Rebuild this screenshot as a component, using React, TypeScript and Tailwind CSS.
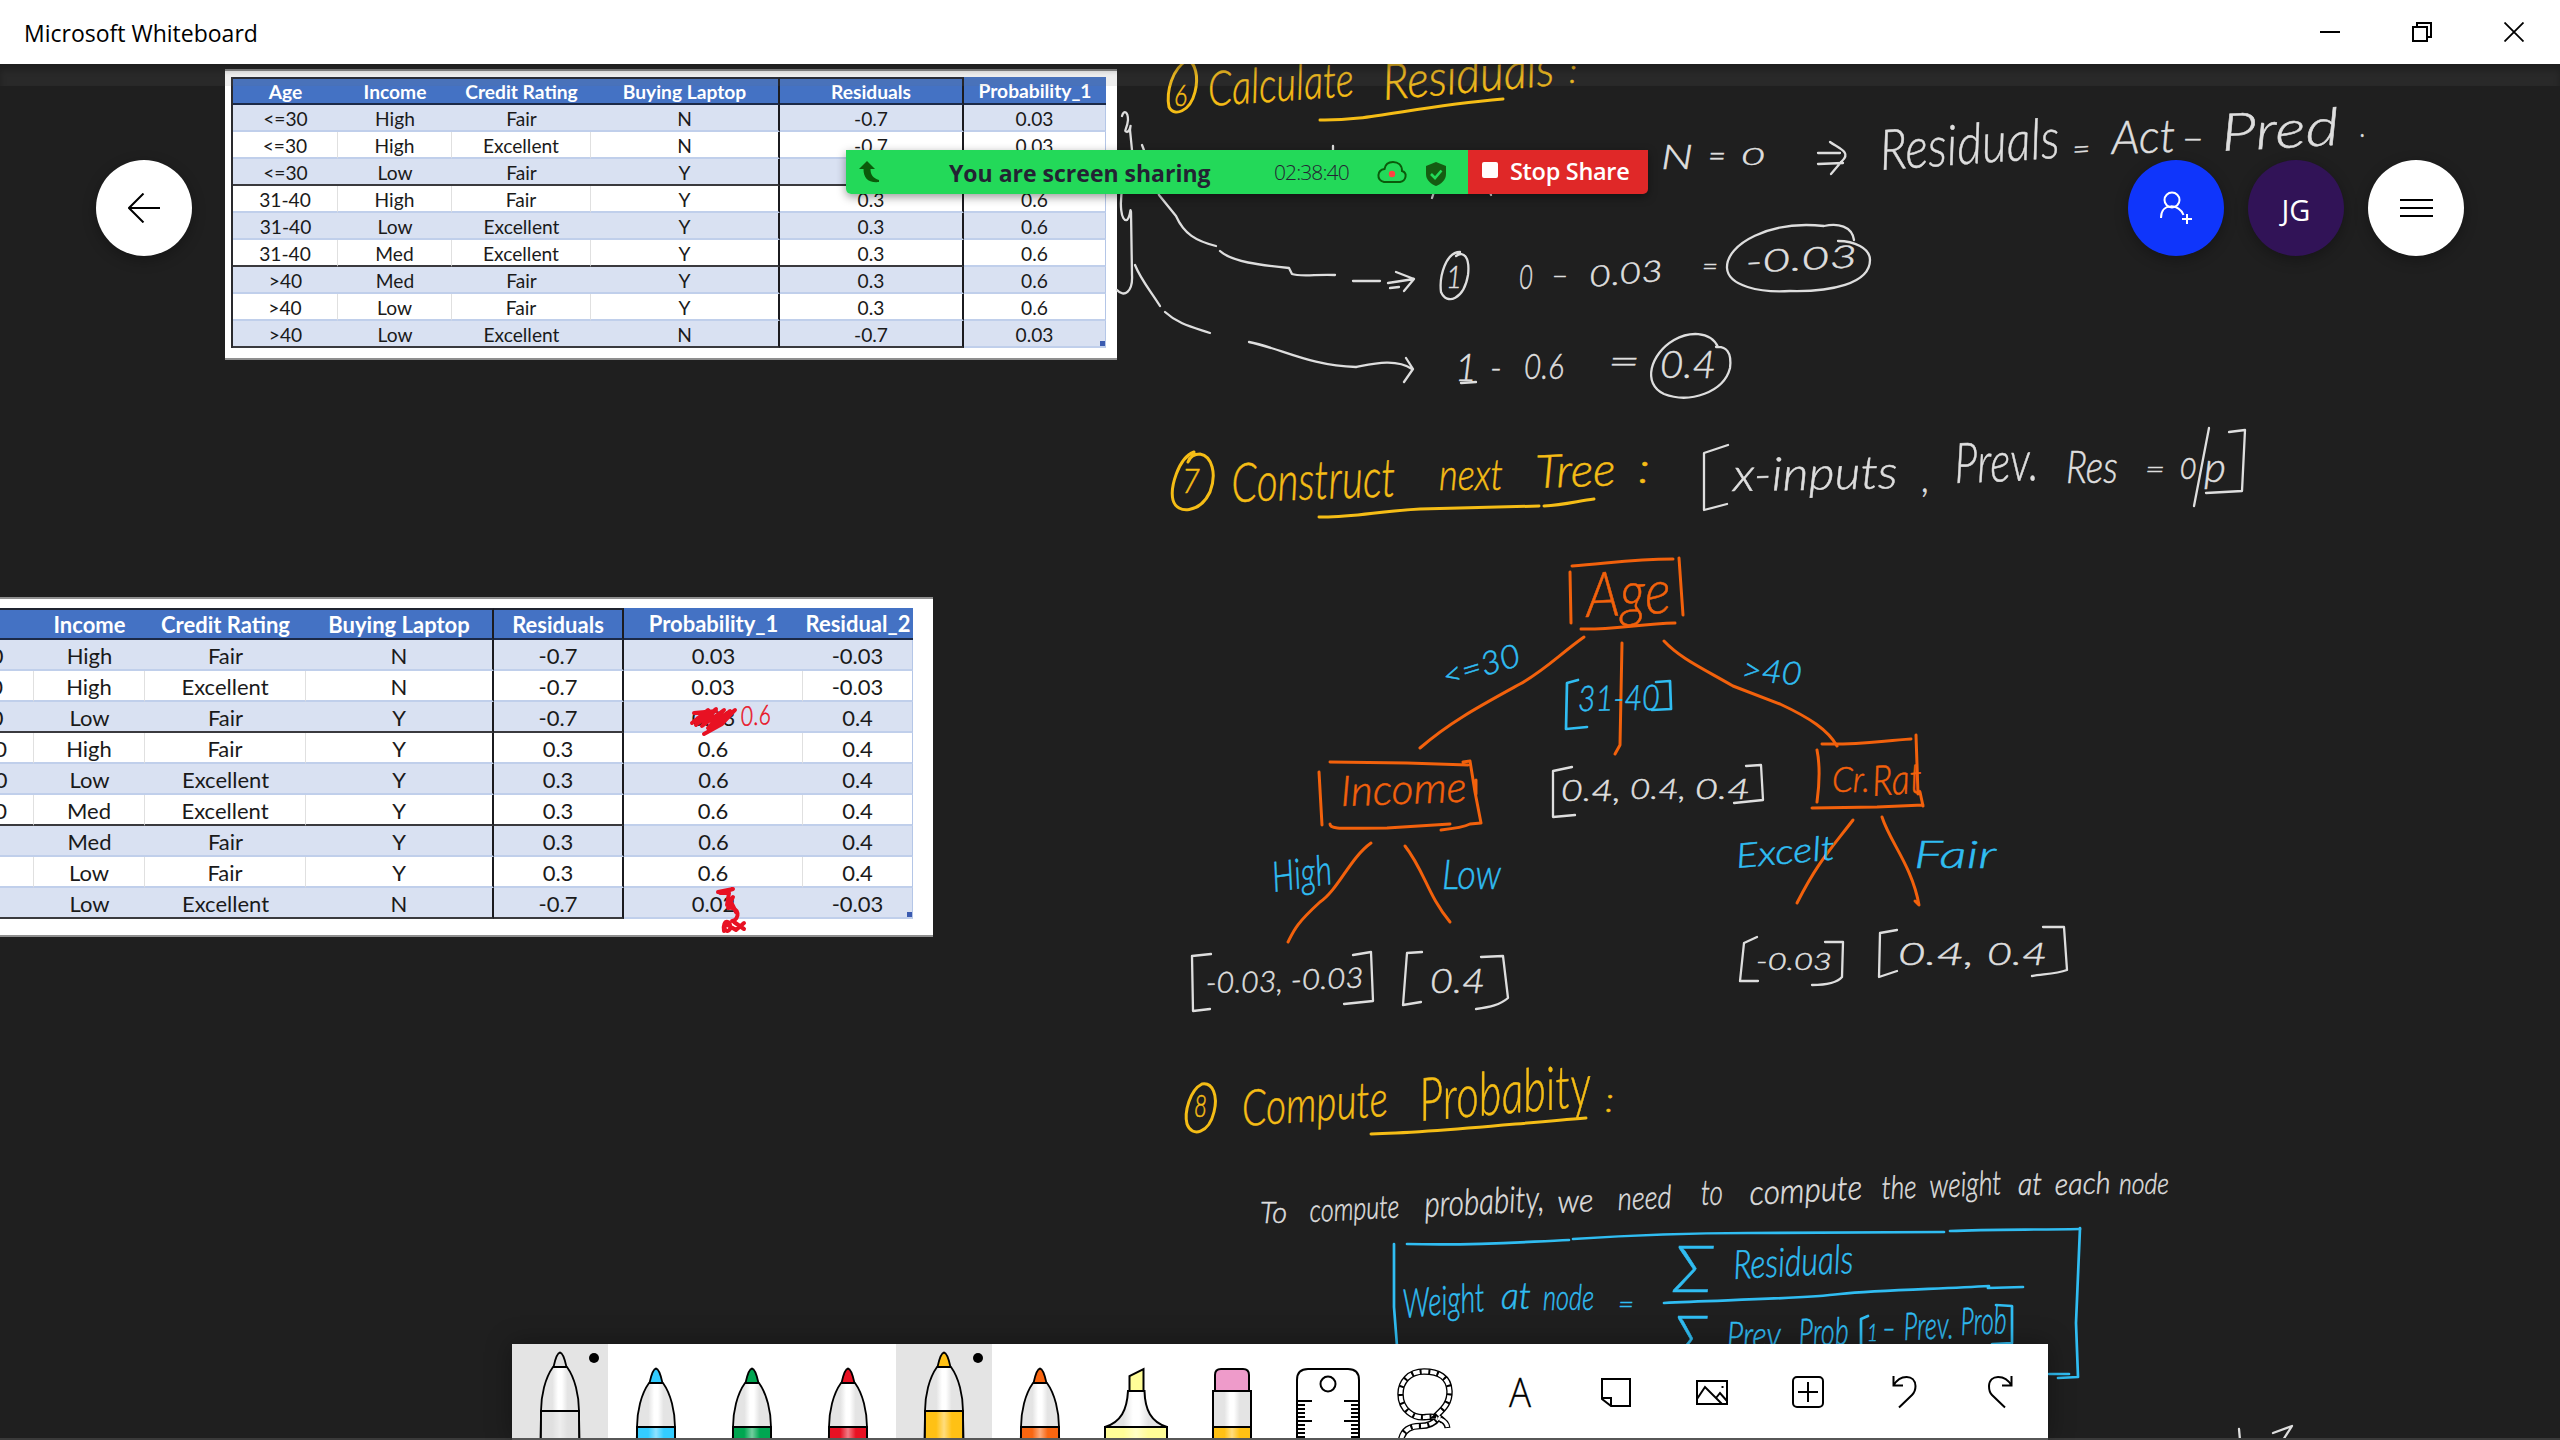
import React from "react";

const UI = "font-['Open_Sans','Noto_Sans',sans-serif]";

/* ---------- spreadsheets pasted on the board ---------- */

type SheetProps = {
  header: string[];
  rows: string[][];
  columns: string;
  rowTemplate: string;
  boxedColumns: number;
  textSize: string;
};

function Sheet({ header, rows, columns, rowTemplate, boxedColumns, textSize }: SheetProps) {
  const lastRow = rows.length - 1;
  const last = header.length - 1;
  return (
    <div className={`relative grid ${columns} ${rowTemplate} ${textSize} font-['Lato','Open_Sans',sans-serif] text-center text-[#1a1a1a]`}>
      {header.map((h, i) => (
        <div
          key={h}
          className={`flex items-center justify-center whitespace-nowrap border-b-2 border-b-[#1c2a48] bg-[#4472c4] pt-[2px] font-bold text-white ${
            i <= boxedColumns ? "border-t-2 border-t-[#1f2430]" : ""
          } ${i === boxedColumns || i === boxedColumns - 1 ? "border-r-2 border-r-[#1b1b1f]" : ""}`}
        >
          {h}
        </div>
      ))}
      {rows.map((r, ri) =>
        r.map((c, ci) => {
          const banded = ri % 2 === 0;
          const boxed = ci <= boxedColumns;
          const heavy = boxed && (ri === 2 || ri === 5 || ri === lastRow);
          const edge = ci === boxedColumns || ci === boxedColumns - 1;
          return (
            <div
              key={`${ri}-${ci}`}
              className={`flex items-center justify-center whitespace-nowrap pt-[3px] ${banded ? "bg-[#d9e1f2]" : "bg-white"} ${
                heavy ? "border-b-2 border-b-[#3a3a3e]" : "border-b-2 border-b-[#c0cfeb]"
              } ${
                edge
                  ? "border-r-2 border-r-[#1b1b1f]"
                  : ci === last
                    ? "border-r border-r-[#b4c6e7]"
                    : banded
                      ? ""
                      : "border-r border-r-[#e0e0e0]"
              }`}
            >
              {c}
            </div>
          );
        }),
      )}
      <span className="absolute bottom-[2px] right-[1px] size-[5px] bg-[#3b5bb0]" />
    </div>
  );
}

const sheetA = [
  ["<=30", "High", "Fair", "N", "-0.7", "0.03"],
  ["<=30", "High", "Excellent", "N", "-0.7", "0.03"],
  ["<=30", "Low", "Fair", "Y", "-0.7", "0.6"],
  ["31-40", "High", "Fair", "Y", "0.3", "0.6"],
  ["31-40", "Low", "Excellent", "Y", "0.3", "0.6"],
  ["31-40", "Med", "Excellent", "Y", "0.3", "0.6"],
  [">40", "Med", "Fair", "Y", "0.3", "0.6"],
  [">40", "Low", "Fair", "Y", "0.3", "0.6"],
  [">40", "Low", "Excellent", "N", "-0.7", "0.03"],
];

const sheetB = [
  ["<=30", "High", "Fair", "N", "-0.7", "0.03", "-0.03"],
  ["<=30", "High", "Excellent", "N", "-0.7", "0.03", "-0.03"],
  ["<=30", "Low", "Fair", "Y", "-0.7", "0.03", "0.4"],
  ["31-40", "High", "Fair", "Y", "0.3", "0.6", "0.4"],
  ["31-40", "Low", "Excellent", "Y", "0.3", "0.6", "0.4"],
  ["31-40", "Med", "Excellent", "Y", "0.3", "0.6", "0.4"],
  [">40", "Med", "Fair", "Y", "0.3", "0.6", "0.4"],
  [">40", "Low", "Fair", "Y", "0.3", "0.6", "0.4"],
  [">40", "Low", "Excellent", "N", "-0.7", "0.02", "-0.03"],
];

/* ---------- ink ---------- */

const YELLOW = "#f5bd16";
const WHITE = "#dedede";
const ORANGE = "#f2610c";
const BLUE = "#30bdf2";
const RED = "#e81123";

// text, x, baseline, width, font size, rotation
type Note = [string, number, number, number, number, number?];

const notes: { color: string; items: Note[] }[] = [
  {
    color: YELLOW,
    items: [
      ["6", 1174, 106, 13, 29],
      ["Calculate", 1209, 106, 146, 48, -4],
      ["Residuals", 1384, 100, 172, 50, -5],
      [":", 1569, 83, 8, 34],
      ["7", 1182, 493, 18, 34],
      ["Construct", 1232, 502, 164, 54, -2],
      ["next", 1439, 490, 64, 44],
      ["Tree", 1536, 488, 80, 46, -2],
      [":", 1638, 483, 12, 44],
      ["8", 1194, 1117, 13, 32],
      ["Compute", 1243, 1126, 146, 50, -4],
      ["Probabity", 1421, 1121, 172, 60, -5],
      [":", 1605, 1112, 9, 34],
    ],
  },
  {
    color: WHITE,
    items: [
      ["N", 1661, 169, 32, 33],
      ["=", 1708, 167, 18, 34],
      ["0", 1741, 165, 24, 24],
      ["Residuals", 1881, 170, 180, 56, -4],
      ["=", 2073, 160, 18, 30, -4],
      ["Act", 2112, 154, 64, 46, -2],
      ["–", 2181, 149, 24, 34],
      ["Pred", 2222, 151, 118, 52, -3],
      [".", 2360, 137, 6, 32],
      ["1", 1446, 288, 16, 32],
      ["0", 1519, 289, 14, 34],
      ["–", 1551, 285, 18, 30],
      ["0.03", 1590, 287, 74, 29, -5],
      ["=", 1702, 275, 16, 24],
      ["-0.03", 1746, 273, 112, 31, -3],
      ["1", 1455, 381, 22, 38],
      ["-", 1490, 380, 12, 34],
      ["0.6", 1524, 379, 40, 35],
      ["=", 1608, 374, 32, 36],
      ["0.4", 1660, 378, 56, 37],
      ["x-inputs", 1733, 491, 165, 46, -1],
      [",", 1922, 492, 8, 40],
      ["Prev.", 1955, 483, 84, 56, -2],
      ["Res", 2066, 483, 52, 46],
      ["=", 2145, 479, 20, 28],
      ["o", 2180, 479, 17, 42],
      ["p", 2204, 482, 22, 42],
      ["0.4,", 1561, 801, 60, 29],
      ["0.4,", 1630, 799, 56, 28],
      ["0.4", 1695, 799, 55, 28],
      ["-0.03,", 1206, 993, 77, 29, -1],
      ["-0.03", 1291, 990, 73, 28, -2],
      ["0.4", 1430, 993, 55, 34],
      ["-0.03", 1756, 970, 76, 23],
      ["0.4,", 1898, 965, 76, 31],
      ["0.4", 1987, 965, 60, 31],
      ["To", 1260, 1223, 27, 30],
      ["compute", 1310, 1222, 90, 32, -3],
      ["probabity,", 1425, 1217, 120, 36, -3],
      ["we", 1558, 1213, 36, 32, -3],
      ["need", 1618, 1210, 54, 32, -2],
      ["to", 1701, 1205, 22, 36],
      ["compute", 1750, 1205, 113, 34, -3],
      ["the", 1882, 1199, 35, 32, -2],
      ["weight", 1930, 1198, 72, 34, -3],
      ["at", 2018, 1195, 24, 32],
      ["each", 2055, 1195, 56, 30, -2],
      ["node", 2119, 1194, 50, 30],
    ],
  },
  {
    color: ORANGE,
    items: [
      ["Age", 1587, 617, 85, 62, -3],
      ["Income", 1341, 806, 126, 42, -2],
      ["Cr.", 1832, 792, 38, 36],
      ["Rat", 1873, 796, 50, 42, -4],
    ],
  },
  {
    color: BLUE,
    items: [
      ["<=30", 1446, 688, 80, 32, -17],
      ["31-40", 1578, 711, 82, 35, -1],
      [">40", 1741, 680, 60, 32, 5],
      ["High", 1274, 892, 60, 42, -8],
      ["Low", 1442, 889, 59, 42],
      ["Excelt", 1737, 868, 99, 34, -5],
      ["Fair", 1914, 868, 82, 38],
      ["Σ", 1673, 1292, 40, 66],
      ["Residuals", 1734, 1279, 120, 40, -3],
      ["Weight", 1404, 1318, 82, 40, -5],
      ["at", 1501, 1309, 30, 38],
      ["node", 1543, 1310, 51, 36],
      ["=", 1618, 1313, 16, 26],
      ["Σ", 1673, 1362, 34, 66],
      ["Prev.", 1727, 1349, 60, 38, -1],
      ["Prob", 1799, 1346, 50, 38, -2],
      ["1", 1867, 1341, 11, 24],
      ["-", 1882, 1340, 14, 34],
      ["Prev.", 1904, 1340, 50, 38, -2],
      ["Prob", 1961, 1335, 46, 38, -2],
    ],
  },
  { color: RED, items: [["0.6", 741, 726, 30, 27, -4]] },
];

const strokes: { color: string; width: number; d: string[] }[] = [
  {
    color: YELLOW,
    width: 3,
    d: [
      "M1188 60C1172 68 1166 92 1169 107C1174 117 1190 112 1195 92C1199 76 1195 63 1188 60",
      "M1320 120C1370 121 1410 107 1503 99",
      "M1194 452C1178 458 1170 488 1173 500C1177 515 1200 513 1210 492C1217 474 1212 456 1200 454C1194 454 1190 457 1188 462",
      "M1319 517C1350 518 1380 511 1420 509L1539 506",
      "M1544 506C1564 505 1578 501 1594 499",
      "M1202 1084C1190 1090 1184 1112 1187 1124C1192 1138 1209 1133 1214 1112C1218 1096 1213 1082 1202 1084",
      "M1371 1134C1430 1133 1500 1125 1586 1118",
    ],
  },
  {
    color: WHITE,
    width: 2.3,
    d: [
      "M1122 116C1124 109 1128 112 1128 120C1127 130 1123 131 1127 132C1131 131 1131 120 1130 130L1132 150",
      "M1142 145L1147 158L1159 195L1176 216C1184 234 1196 241 1216 246",
      "M1123 185C1119 204 1121 222 1127 220C1131 216 1130 206 1131 212L1132 275C1133 292 1124 298 1117 290",
      "M1220 251C1232 262 1260 265 1289 268L1292 274C1300 277 1318 274 1335 275",
      "M1353 281L1380 281M1388 283L1414 279M1396 272L1414 279L1404 291M1390 288L1399 287",
      "M1135 265C1141 280 1150 290 1160 306M1165 312C1178 324 1192 327 1210 333",
      "M1249 342C1280 348 1310 366 1356 367C1372 364 1396 358 1412 369M1406 358L1413 369L1404 382",
      "M1460 252C1446 252 1439 276 1441 292C1447 306 1464 299 1468 275C1470 258 1464 250 1456 256",
      "M1818 153L1840 153M1818 164L1843 163M1830 142C1838 148 1852 152 1842 161L1831 174",
      "M1854 240C1852 226 1838 223 1824 226C1770 220 1726 244 1727 268C1728 286 1760 293 1790 291C1830 292 1870 284 1870 260C1870 248 1854 241 1838 241",
      "M1718 347C1710 330 1688 332 1674 340C1650 354 1642 384 1664 394C1690 404 1724 392 1730 368C1732 352 1726 346 1716 347",
      "M1461 383L1476 382",
      "M1728 445L1704 453L1704 510L1727 504",
      "M2209 428L2194 506",
      "M2229 432L2245 430L2242 491L2206 493",
      "M1572 767L1553 771L1553 817L1575 815",
      "M1746 766L1761 765L1763 800L1734 803",
      "M1211 954L1192 956L1193 1011L1210 1009",
      "M1353 955L1371 952L1373 1001L1344 1004",
      "M1422 952L1407 953L1403 1005L1421 1002",
      "M1481 957L1503 956L1508 998C1500 1005 1490 1007 1476 1009",
      "M1757 937L1744 943L1740 981L1758 981",
      "M1825 942L1843 942L1842 977C1836 984 1824 985 1812 985",
      "M1897 930L1880 933L1879 977L1897 971",
      "M2043 927L2064 927L2067 970C2056 974 2044 974 2032 976",
      "M1333 146L1333 152M1434 192L1432 198M1490 192L1491 195",
      "M2239 1429L2240 1440M2273 1433L2292 1426L2283 1440",
    ],
  },
  {
    color: ORANGE,
    width: 3,
    d: [
      "M1572 566C1605 564 1630 559 1673 559M1570 572L1571 623M1679 558L1683 615M1581 629C1610 630 1640 624 1675 623",
      "M1584 637C1560 654 1545 670 1520 684C1480 706 1450 722 1420 748",
      "M1622 643L1620 745L1615 754",
      "M1664 641C1680 658 1700 667 1733 686L1780 704C1810 718 1828 730 1837 746",
      "M1330 762L1407 763L1468 765M1463 762L1470 761L1475 792L1481 823L1470 824C1464 827 1450 829 1441 830M1319 772L1322 825M1330 824C1330 830 1345 828 1387 828L1450 824M1476 780L1476 794",
      "M1371 843C1350 858 1338 890 1320 902C1296 924 1294 930 1288 942",
      "M1405 846C1424 870 1428 896 1450 922",
      "M1822 744C1860 745 1880 741 1911 739M1817 750C1820 765 1820 780 1817 802M1916 735L1918 794M1920 792L1923 806M1812 808L1877 807L1923 805",
      "M1853 820C1830 850 1818 862 1797 903",
      "M1882 817C1890 842 1912 866 1919 905L1915 901",
    ],
  },
  {
    color: BLUE,
    width: 2.7,
    d: [
      "M1578 680L1567 683L1566 729L1587 727",
      "M1656 682L1670 681L1671 709L1652 710",
      "M1407 1244C1480 1246 1520 1242 1569 1240M1573 1239C1650 1234 1700 1233 1748 1233L1944 1232M1950 1231C1990 1229 2030 1230 2080 1229",
      "M2080 1228L2076 1323L2078 1377L2058 1378M2049 1374L2069 1374",
      "M1394 1244L1394 1307L1397 1346",
      "M1664 1303C1720 1300 1800 1299 1840 1294C1880 1290 1940 1289 1989 1286L1988 1288L2023 1287",
      "M1868 1316L1861 1319L1861 1346",
      "M1996 1305L2012 1306L2012 1343L1992 1344",
    ],
  },
  {
    color: RED,
    width: 4,
    d: [
      "M692 723L708 710L696 725L716 709L702 726L724 710L708 728L730 711L714 727L735 710L722 724L704 734M694 713L716 711M698 718L728 716",
      "M718 892L733 889L720 893L729 893L727 905L733 897L728 908C740 906 740 920 732 921M730 900L736 912",
      "M724 931C722 918 732 920 730 929C727 934 722 929 726 924L736 930L744 923M734 922L744 929",
    ],
  },
];

function Ink() {
  return (
    <svg className="pointer-events-none absolute inset-0" width="2560" height="1440" viewBox="0 0 2560 1440">
      {strokes.map((s) => (
        <g key={s.color} fill="none" stroke={s.color} strokeWidth={s.width} strokeLinecap="round" strokeLinejoin="round">
          {s.d.map((d) => (
            <path key={d} d={d} />
          ))}
        </g>
      ))}
      {notes.map((n) => (
        <g key={n.color} fill={n.color} stroke={n.color} strokeWidth="0.5" className="font-['Lato','Open_Sans',sans-serif] font-light italic">
          {n.items.map(([t, x, y, w, size, r = 0]) => (
            <text
              key={`${t}${x}${y}`}
              x={x}
              y={y}
              fontSize={size}
              textLength={w}
              lengthAdjust="spacingAndGlyphs"
              transform={r ? `rotate(${r} ${x} ${y})` : undefined}
            >
              {t}
            </text>
          ))}
        </g>
      ))}
    </svg>
  );
}

/* ---------- chrome ---------- */

function TitleBar() {
  return (
    <header className={`relative z-10 flex h-16 items-center justify-between bg-white pl-6 text-black ${UI}`}>
      <h1 className="pt-[2px] text-[23px] leading-8">Microsoft Whiteboard</h1>
      <div className="flex">
        <button className="flex h-16 w-[92px] items-center justify-center" aria-label="Minimize">
          <svg width="20" height="20" viewBox="0 0 20 20"><path d="M0 10H20" stroke="black" strokeWidth="2" /></svg>
        </button>
        <button className="flex h-16 w-[92px] items-center justify-center" aria-label="Restore">
          <svg width="20" height="20" viewBox="0 0 20 20" fill="none" stroke="black" strokeWidth="2">
            <path d="M1 5H15V19H1ZM5 5V1H19V15H15" />
          </svg>
        </button>
        <button className="flex h-16 w-[92px] items-center justify-center" aria-label="Close">
          <svg width="20" height="20" viewBox="0 0 20 20" stroke="black" strokeWidth="1.8"><path d="M0.5 0.5L19.5 19.5M19.5 0.5L0.5 19.5" /></svg>
        </button>
      </div>
    </header>
  );
}

function ShareBar() {
  return (
    <div className={`absolute left-[846px] top-[150px] flex h-[44px] w-[802px] overflow-hidden rounded-b-[5px] shadow-[0_3px_10px_rgba(0,0,0,0.4)] ${UI}`}>
      <div className="flex w-[622px] items-center bg-[#23d959] text-[#232333]">
        <svg className="ml-[13px] shrink-0" width="20" height="22" viewBox="0 0 20 22">
          <path d="M8 0L16 8H11.5C11.5 14 14 17 20 19V21C9 22 4.500 17 4.500 8H0Z" fill="#0b5a0b" />
        </svg>
        <span className="ml-[70px] w-[262px] whitespace-nowrap pt-[2px] text-[23px] font-bold leading-8">You are screen sharing</span>
        <span className="ml-[63px] w-[86px] whitespace-nowrap text-[21px] font-light leading-8 tracking-[-0.900px]">02:38:40</span>
        <svg className="ml-[16px] shrink-0" width="32" height="24" viewBox="0 0 32 24">
          <path d="M8 22H24C30 21 32 13 26 11C26 5 22 2 17 2C11 2 9 6 8.500 9C1 10 0 20 8 22Z" fill="none" stroke="#0b5a0b" strokeWidth="2" />
          <circle cx="16" cy="14" r="3.200" fill="#ff4242" />
        </svg>
        <svg className="ml-[17px] mt-1 shrink-0" width="22" height="24" viewBox="0 0 22 24">
          <path d="M11 0L21 4V12C21 18 16 22 11 24C6 22 1 18 1 12V4Z" fill="#155c12" />
          <path d="M6 12L10 16L16.500 8.500" fill="none" stroke="#23d959" strokeWidth="2.600" />
        </svg>
      </div>
      <button className="flex flex-1 items-center bg-[#e02828] pl-[14px] text-white">
        <span className="-mt-1 size-4 rounded-[2px] bg-white" />
        <span className="-mt-[2px] ml-3 whitespace-nowrap text-[23.500px] font-semibold leading-8 tracking-[-0.300px]">Stop Share</span>
      </button>
    </div>
  );
}

function RoundButtons() {
  const base = "flex size-24 items-center justify-center rounded-full shadow-[0_4px_14px_rgba(0,0,0,0.3)]";
  return (
    <>
      <button className={`absolute left-24 top-40 bg-white ${base}`} aria-label="Back">
        <svg width="32" height="30" viewBox="0 0 32 30" fill="none" stroke="black" strokeWidth="2"><path d="M32 15H1M15.500 0.500L1 15L15.500 29.500" /></svg>
      </button>
      <div className={`absolute right-24 top-40 flex gap-6 ${UI}`}>
        <button className={`bg-[#0f35fb] ${base}`} aria-label="Invite">
          <svg width="36" height="36" viewBox="0 0 36 36" fill="none" stroke="white" strokeWidth="2">
            <circle cx="14" cy="10" r="7.500" />
            <path d="M3 28C3 12 22 14 25.500 25M29 24V34M24 29H34" />
          </svg>
        </button>
        <button className={`bg-[#311357] text-[29px] text-white ${base}`}>
          <span className="pt-1">JG</span>
        </button>
        <button className={`bg-white ${base}`} aria-label="Menu">
          <svg width="33" height="20" viewBox="0 0 33 20" stroke="black" strokeWidth="2"><path d="M0 2H33M0 10H33M0 18H33" /></svg>
        </button>
      </div>
    </>
  );
}

function Pen({ color, selected = false }: { color: string; selected?: boolean }) {
  const id = `pen${color.slice(1)}`;
  return (
    <div className={`relative h-full w-24 shrink-0 ${selected ? "bg-[#e4e4e4]" : ""}`}>
      <svg width="96" height="94" viewBox="0 0 96 94">
        <defs>
          <linearGradient id={id}>
            <stop offset="0.300" stopColor="#e4e4e4" />
            <stop offset="0.450" stopColor="#ffffff" />
            <stop offset="0.550" stopColor="#ffffff" />
            <stop offset="0.700" stopColor="#e4e4e4" />
          </linearGradient>
          <linearGradient id={`${id}s`}>
            <stop offset="0.300" stopColor="white" stopOpacity="0" />
            <stop offset="0.500" stopColor="white" stopOpacity="0.450" />
            <stop offset="0.700" stopColor="white" stopOpacity="0" />
          </linearGradient>
        </defs>
        <g transform={selected ? undefined : "translate(0 16)"} stroke="black" strokeWidth="1.800" strokeLinejoin="round">
          <path d="M41.500 23C43 16 45 9 48 8.500C51 9 53 16 54.500 23Z" fill={color} />
          <path d="M29 67C29 52 33 34 41 23H55C63 34 67 52 67 67Z" fill={`url(#${id})`} />
          <path d="M29 67H67L67.500 110H28.500Z" fill={color} />
          <path d="M29 67H67L67.500 110H28.500Z" fill={`url(#${id}s)`} />
        </g>
      </svg>
      {selected && <span className="absolute right-[9px] top-[9px] size-[10px] rounded-full bg-black" />}
    </div>
  );
}

function Tool({ label, children }: { label: string; children: React.ReactNode }) {
  return (
    <button aria-label={label} className="h-full w-24 shrink-0">
      <svg width="96" height="94" viewBox="0 0 96 94" fill="none" stroke="black" strokeWidth="2">
        {children}
      </svg>
    </button>
  );
}

const rope = "M67 77C64 74 62 72 60 72C66 66 74 60 73.500 47C73 33 62 27.500 48 27.500C33 27.500 24.500 38 24.500 50C24.500 66 38 75 50 73C58 72 60 73 62 74";
const ropeTail = "M63 73C58 80 52 82 44 82C34 82 27 86 25 96";

function Toolbar() {
  const ticks = [57, 61, 65, 69, 73, 77, 81, 85, 89, 93];
  return (
    <nav className="absolute bottom-0 left-[512px] flex h-24 w-[1536px] flex-col bg-white shadow-[0_0_24px_rgba(0,0,0,0.35)]">
      <div className="flex h-[94px] overflow-hidden">
        <Pen color="#e0e0e0" selected />
        <Pen color="#33ccff" />
        <Pen color="#00a651" />
        <Pen color="#e81123" />
        <Pen color="#ffc114" selected />
        <Pen color="#f96611" />
        <Tool label="Highlighter">
          <path d="M41.500 47V32L55.500 25V47Z" fill="#fffd98" />
          <path d="M40 47H56.500C57 66 63 78 79 83H17C33 78 39 66 40 47Z" fill="url(#pen33ccff)" />
          <path d="M17 83H79V110H17Z" fill="#fffd98" />
          <path d="M17 83H79V110H17Z" fill="url(#pen33ccffs)" />
        </Tool>
        <Tool label="Eraser">
          <path d="M31 47V31Q31 25 37 25H59Q65 25 65 31V47Z" fill="#ee9bca" />
          <path d="M29 47H67V83H29Z" fill="url(#pen33ccff)" />
          <path d="M29 83H67V110H29Z" fill="#ffc114" />
          <path d="M29 83H67V110H29Z" fill="url(#pen33ccffs)" />
        </Tool>
        <Tool label="Ruler">
          <path d="M17 110V36Q17 25 28 25H68Q79 25 79 36V110" />
          <circle cx="48" cy="40" r="7.500" />
          {ticks.map((y) => {
            const w = (y - 57) % 20 === 0 ? 15 : 8;
            return <path key={y} d={`M17 ${y}H${17 + w}M79 ${y}H${79 - w}`} />;
          })}
        </Tool>
        <Tool label="Lasso">
          <path d={ropeTail} strokeWidth="6.500" />
          <path d={rope} strokeWidth="6.500" />
          <path d={ropeTail} stroke="white" strokeWidth="3.800" />
          <path d={rope} stroke="white" strokeWidth="3.800" />
          <path d={rope} strokeWidth="5" strokeDasharray="2 6.500" />
          <path d={ropeTail} strokeWidth="5" strokeDasharray="2 6.500" strokeDashoffset="-4" />
          <path d="M64 75C69 77 71 80 71.500 84" strokeWidth="6" />
          <path d="M64 75C69 77 71 80 71.500 83" stroke="white" strokeWidth="3.400" />
        </Tool>
        <Tool label="Text">
          <text x="37" y="63" fontSize="41" textLength="22" lengthAdjust="spacingAndGlyphs" fill="black" stroke="black" strokeWidth="0.300" className="font-['Open_Sans',sans-serif] font-light">A</text>
        </Tool>
        <Tool label="Note">
          <path d="M34 55V35H62V62H43L34 55ZM34 54H43V62" />
        </Tool>
        <Tool label="Image">
          <path d="M33 37H63V60H33Z" />
          <path d="M33 55L41 43L58 60M52 54L56 49L63 57" />
          <path d="M57.500 43H59.500" />
        </Tool>
        <Tool label="Insert">
          <rect x="33" y="33" width="30" height="30" rx="4" />
          <path d="M48 38V58M38 48H58" />
        </Tool>
        <Tool label="Undo">
          <path d="M37.500 32V41.500H47M37.500 41.500C44 30 59 30 59.500 42C59.500 46 58 49 56 51L43 63.500" />
        </Tool>
        <Tool label="Redo">
          <path d="M59.500 32V41.500H50M59.500 41.500C53 30 37.500 30 37 42C37 46 38 49 40 51L53 63.500" />
        </Tool>
      </div>
      <div className="h-[2px] bg-[#575757]" />
    </nav>
  );
}

export default function App() {
  return (
    <div className="relative h-[1440px] w-[2560px] overflow-hidden bg-[#1f1f1f]">
      <TitleBar />
      <div className="absolute left-[225px] top-[69px] h-[291px] w-[892px] border-y-2 border-y-[#8f8f8f] bg-white pl-[6px] pt-[6px]">
        <div className="w-[875px] border-l-2 border-l-[#2a2a2e]">
          <Sheet
            header={["Age", "Income", "Credit Rating", "Buying Laptop", "Residuals", "Probability_1"]}
            rows={sheetA}
            boxedColumns={4}
            columns="grid-cols-[105px_114px_139px_189px_184px_142px]"
            rowTemplate="grid-rows-[28px_repeat(9,27.060px)]"
            textSize="text-[19.200px] leading-[20px]"
          />
        </div>
      </div>
      <div className="absolute left-0 top-[597px] h-[340px] w-[933px] overflow-hidden border-y-2 border-y-[#8f8f8f] bg-white pt-[9px]">
        <div className="-ml-[78px] w-[991px]">
          <Sheet
            header={["Age ", "Income", "Credit Rating", "Buying Laptop", "Residuals", "Probability_1", "Residual_2"]}
            rows={sheetB}
            boxedColumns={4}
            columns="grid-cols-[112px_111px_161px_188px_130px_179px_110px]"
            rowTemplate="grid-rows-[32px_repeat(9,31.060px)]"
            textSize="text-[22px] leading-[24px]"
          />
        </div>
      </div>
      <Ink />
      <div className="absolute inset-x-0 top-16 h-[22px] bg-[rgba(117,117,117,0.12)] shadow-[inset_0_6px_6px_rgba(0,0,0,0.25)]" />
      <RoundButtons />
      <ShareBar />
      <div className="absolute inset-x-0 bottom-0 h-[2px] bg-[#3a3a3a]" />
      <Toolbar />
    </div>
  );
}
